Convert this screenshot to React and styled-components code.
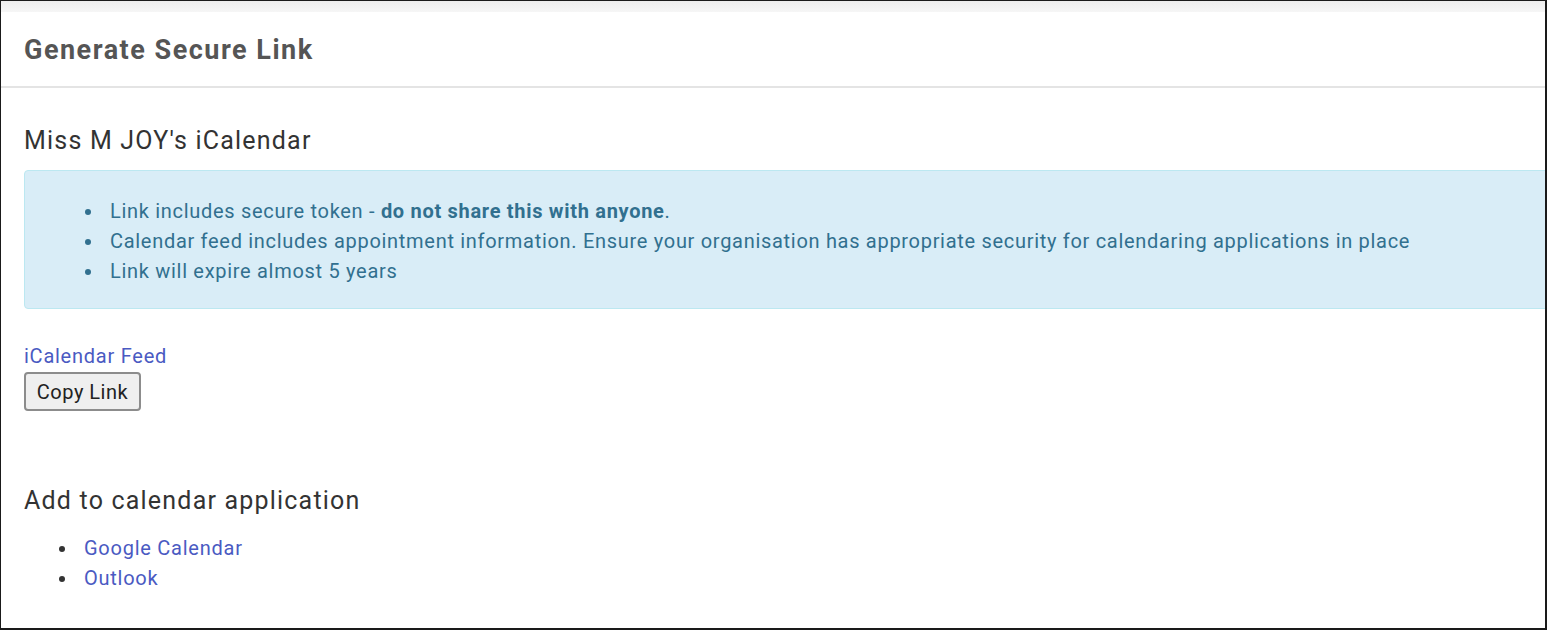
import styled, { createGlobalStyle } from "styled-components";

const GlobalStyle = createGlobalStyle`
  html, body {
    margin: 0;
    padding: 0;
    background: #ffffff;
  }
  body {
    font-family: Roboto, "Liberation Sans", Arial, sans-serif;
  }
  * {
    box-sizing: border-box;
  }
`;

const Frame = styled.div`
  width: 1547px;
  height: 630px;
  border-top: 1px solid #1a1a1a;
  border-left: 1px solid #1a1a1a;
  border-right: 2px solid #1a1a1a;
  border-bottom: 2px solid #1a1a1a;
  background: #fff;
  overflow: hidden;
  display: flex;
  flex-direction: column;
`;

const TopStrip = styled.div`
  height: 11px;
  background: linear-gradient(180deg, #ededed 0%, #f6f6f6 100%);
`;

const Header = styled.header`
  height: 76px;
  display: flex;
  align-items: center;
  padding-left: 23px;
  padding-top: 2px;
  border-bottom: 2px solid #e4e4e4;
`;

const Title = styled.h1`
  margin: 0;
  font-size: 27px;
  font-weight: 700;
  color: #555555;
  letter-spacing: 1.5px;
`;

const Body = styled.main`
  padding-left: 23px;
  margin-right: -12px;
  display: flex;
  flex-direction: column;
  align-items: flex-start;
`;

const Heading = styled.h2`
  margin: ${(p) => p.$top}px 0 0;
  font-size: 25px;
  line-height: 30px;
  font-weight: 400;
  color: #333333;
  letter-spacing: 1.2px;
`;

const Alert = styled.div`
  align-self: stretch;
  margin-top: 14px;
  height: 139px;
  background: #d9edf7;
  border: 1px solid #bce8f1;
  border-radius: 4px;
  color: #31708f;
  padding-top: 25px;
`;

const BulletList = styled.ul`
  margin: ${(p) => p.$top || 0}px 0 0;
  padding-left: ${(p) => p.$indent}px;
  list-style: none;
  font-size: 20px;
  line-height: 30px;
  letter-spacing: 0.7px;
  color: ${(p) => p.$color || "inherit"};
`;

const Item = styled.li`
  position: relative;

  &::before {
    content: "";
    position: absolute;
    left: -25px;
    top: 13px;
    width: 6px;
    height: 6px;
    border-radius: 50%;
    background: currentColor;
  }
`;

const Strong = styled.strong`
  font-weight: 700;
`;

const Link = styled.a`
  color: #4a5ac2;
  text-decoration: none;
  font-size: 20px;
  line-height: 26px;
  letter-spacing: 0.75px;
  cursor: pointer;
`;

const FeedLink = styled(Link)`
  margin-top: 34px;
`;

const Button = styled.button`
  margin-top: 3px;
  height: 39px;
  width: 117px;
  padding: 0;
  font-family: Roboto, "Liberation Sans", Arial, sans-serif;
  font-size: 20px;
  letter-spacing: 0.5px;
  color: #222;
  background: #efefef;
  border: 2px solid #8c8c8c;
  border-radius: 4px;
  cursor: pointer;
`;

export default function App() {
  return (
    <>
      <GlobalStyle />
      <Frame>
        <TopStrip />
        <Header>
          <Title>Generate Secure Link</Title>
        </Header>
        <Body>
          <Heading $top={38}>Miss M JOY's iCalendar</Heading>
          <Alert>
            <BulletList $indent={85}>
              <Item>
                Link includes secure token - <Strong>do not share this with anyone</Strong>.
              </Item>
              <Item>
                Calendar feed includes appointment information. Ensure your organisation has
                appropriate security for calendaring applications in place
              </Item>
              <Item>Link will expire almost 5 years</Item>
            </BulletList>
          </Alert>
          <FeedLink>iCalendar Feed</FeedLink>
          <Button>Copy Link</Button>
          <Heading $top={75}>Add to calendar application</Heading>
          <BulletList $indent={60} $top={17} $color="#333">
            <Item>
              <Link>Google Calendar</Link>
            </Item>
            <Item>
              <Link>Outlook</Link>
            </Item>
          </BulletList>
        </Body>
      </Frame>
    </>
  );
}
